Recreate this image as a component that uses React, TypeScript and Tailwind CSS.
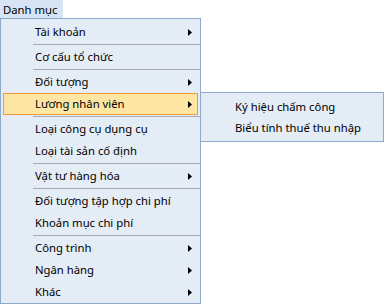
import React from "react";

type Row = { label: string; sub?: boolean; active?: boolean } | "sep";

const rows: Row[] = [
  { label: "Tài khoản", sub: true },
  "sep",
  { label: "Cơ cấu tổ chức" },
  "sep",
  { label: "Đối tượng", sub: true },
  { label: "Lương nhân viên", sub: true, active: true },
  "sep",
  { label: "Loại công cụ dụng cụ" },
  { label: "Loại tài sản cố định" },
  "sep",
  { label: "Vật tư hàng hóa", sub: true },
  "sep",
  { label: "Đối tượng tập hợp chi phí" },
  { label: "Khoản mục chi phí" },
  "sep",
  { label: "Công trình", sub: true },
  { label: "Ngân hàng", sub: true },
  { label: "Khác", sub: true },
];

const subRows = ["Ký hiệu chấm công", "Biểu tính thuế thu nhập"];

function Arrow() {
  return (
    <svg width="4" height="7" viewBox="0 0 4 7" className="shrink-0">
      <path d="M0 0 L4 3.5 L0 7 Z" fill="#000" />
    </svg>
  );
}

export default function App() {
  return (
    <div
      className="relative w-[388px] h-[305px] bg-white text-[11.3px] text-black overflow-hidden"
      style={{ fontFamily: '"Noto Sans", "Liberation Sans", sans-serif' }}
    >
      <div className="w-[63px] h-[18px] bg-[#d7e4f4] flex items-center pl-[3px] pt-[2px] leading-none">
        Danh mục
      </div>

      <div className="w-[201px] border border-[#8fa9cd] bg-[#e4ecf6] pt-[2px]">
        {rows.map((r, i) =>
          r === "sep" ? (
            <div key={i} className="h-[3px] flex items-center pl-[32px]">
              <div className="h-px w-full bg-[#a6a9ad]" />
            </div>
          ) : (
            <div
              key={i}
              className={
                "h-[22px] mx-[2px] flex items-center pl-[31px] pr-[5px] pt-[1px] " +
                (r.active
                  ? "bg-[#fde6a3] border border-[#f39a3c]"
                  : "border border-transparent")
              }
            >
              <span className="flex-1 whitespace-nowrap">{r.label}</span>
              {r.sub && <Arrow />}
            </div>
          )
        )}
      </div>

      <div className="absolute left-[200px] top-[92px] w-[184px] border border-[#8fa9cd] bg-[#e4ecf6] py-[3px]">
        {subRows.map((s) => (
          <div key={s} className="h-[21px] flex items-center pl-[34px] pt-[1px] whitespace-nowrap">
            {s}
          </div>
        ))}
      </div>
    </div>
  );
}
